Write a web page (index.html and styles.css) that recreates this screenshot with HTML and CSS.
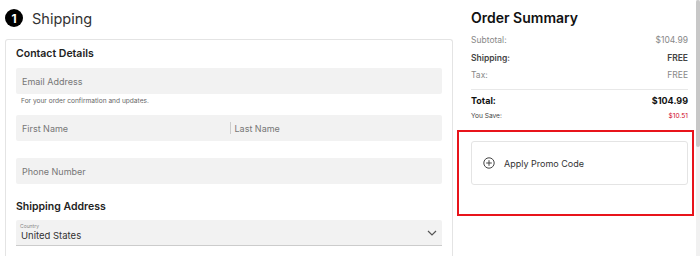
FILE: index.html
```html
<!DOCTYPE html>
<html>
<head>
    <meta charset="UTF-8">
    <title>Checkout</title>
    <link rel="stylesheet" href="styles.css">
</head>
<body>
    <div class="page">
        <div class="main">
            <div class="step-title">
                <span class="step-num">1</span>
                <span class="step-label">Shipping</span>
            </div>
            <div class="card">
                <h3 class="section-title">Contact Details</h3>
                <div class="field"><span class="placeholder">Email Address</span></div>
                <div class="hint">For your order confirmation and updates.</div>
                <div class="field split">
                    <span class="placeholder half">First Name</span>
                    <span class="divider"></span>
                    <span class="placeholder half">Last Name</span>
                </div>
                <div class="field phone"><span class="placeholder">Phone Number</span></div>
                <h3 class="section-title address">Shipping Address</h3>
                <div class="field select">
                    <div class="select-text">
                        <span class="select-label">Country</span>
                        <span class="select-value">United States</span>
                    </div>
                    <svg class="chevron" width="10" height="6" viewBox="0 0 10 6">
                        <path d="M1 1l4 4 4-4" fill="none" stroke="#555" stroke-width="1.2"/>
                    </svg>
                </div>
            </div>
        </div>
        <div class="aside">
            <div class="summary">
                <h2 class="summary-title">Order Summary</h2>
                <div class="row muted"><span>Subtotal:</span><span>$104.99</span></div>
                <div class="row strong"><span>Shipping:</span><span>FREE</span></div>
                <div class="row muted"><span>Tax:</span><span>FREE</span></div>
                <div class="row total"><span>Total:</span><span>$104.99</span></div>
                <div class="row save"><span>You Save:</span><span class="red">$10.51</span></div>
            </div>
            <div class="highlight">
                <div class="promo">
                    <svg class="plus" width="12" height="12" viewBox="0 0 12 12">
                        <circle cx="6" cy="6" r="5.2" fill="none" stroke="#444" stroke-width="1"/>
                        <path d="M6 3.2v5.6M3.2 6h5.6" stroke="#444" stroke-width="1"/>
                    </svg>
                    <span>Apply Promo Code</span>
                </div>
            </div>
        </div>
    </div>
    <div class="scrollbar"><div class="thumb"></div></div>
</body>
</html>
```

FILE: styles.css
```css
body {
    margin: 0;
    font-family: 'Inter', 'Liberation Sans', sans-serif;
    color: #333;
    background: #fff;
    overflow: hidden;
    height: 256px;
}
.page {
    display: flex;
    padding-left: 5px;
    height: 256px;
    overflow: hidden;
}
.main {
    width: 448px;
}
.step-title {
    display: flex;
    align-items: center;
    height: 36px;
}
.step-num {
    width: 18px;
    height: 18px;
    border-radius: 50%;
    background: #000;
    color: #fff;
    font-size: 12px;
    font-weight: 700;
    display: flex;
    align-items: center;
    justify-content: center;
    margin-right: 9px;
}
.step-label {
    font-size: 14.5px;
    color: #333;
}
.card {
    box-sizing: border-box;
    margin-top: 3px;
    border: 1px solid #e4e4e4;
    border-bottom: none;
    border-radius: 3px 3px 0 0;
    padding: 6px 10px 0 10px;
    height: 217px;
}
.section-title {
    margin: 0;
    font-size: 10.5px;
    font-weight: 600;
    color: #222;
    line-height: 16px;
}
.field {
    margin-top: 6px;
    height: 26px;
    background: #f2f2f2;
    border-radius: 2px;
    display: flex;
    align-items: center;
    padding: 0 6px;
}
.placeholder {
    font-size: 9px;
    color: #777;
}
.hint {
    font-size: 6.6px;
    color: #666;
    margin: 3px 0 0 5px;
    line-height: 9px;
}
.split {
    margin-top: 9px;
    padding-right: 0;
}
.half {
    flex: 1;
}
.divider {
    width: 1px;
    height: 12px;
    background: #ccc;
    margin-right: 4px;
}
.phone {
    margin-top: 17px;
}
.address {
    margin-top: 15px;
}
.select {
    margin-top: 5px;
    border-bottom: 1px solid #ccc;
    border-radius: 2px 2px 0 0;
    justify-content: space-between;
    padding: 0 5px 0 4px;
    height: 25px;
}
.select-text {
    display: flex;
    flex-direction: column;
}
.select-label {
    font-size: 5px;
    color: #888;
    line-height: 6px;
}
.select-value {
    font-size: 9.5px;
    color: #333;
    line-height: 13px;
    padding-left: 1px;
}
.aside {
    margin-left: 4px;
    width: 237px;
}
.summary {
    padding: 0 6px 0 14px;
}
.summary-title {
    margin: 0;
    padding-top: 9px;
    font-size: 14px;
    font-weight: 600;
    color: #111;
    line-height: 18px;
    margin-bottom: 5px;
}
.row {
    display: flex;
    justify-content: space-between;
    font-size: 8.5px;
    line-height: 17.5px;
}
.muted {
    color: #888;
}
.strong {
    color: #444;
    font-weight: 600;
}
.total {
    margin-top: 4px;
    padding-top: 2px;
    border-top: 1px solid #e8e8e8;
    color: #111;
    font-weight: 700;
    font-size: 9px;
}
.save {
    font-size: 6.6px;
    color: #444;
    line-height: 15px;
}
.red {
    color: #d0021b;
}
.highlight {
    margin-top: 6px;
    border: 2px solid #e8141b;
    padding: 9px 4px 29px 12px;
}
.promo {
    height: 42px;
    border: 1px solid #e4e4e4;
    border-radius: 3px;
    display: flex;
    align-items: center;
    padding-left: 11px;
    font-size: 9px;
    color: #333;
}
.plus {
    margin-right: 9px;
}
.scrollbar {
    position: fixed;
    top: 0;
    right: 0;
    width: 4px;
    height: 256px;
    background: #f1f1f1;
}
.thumb {
    height: 147px;
    background: #c8c8c8;
    border-radius: 2px;
}
```
